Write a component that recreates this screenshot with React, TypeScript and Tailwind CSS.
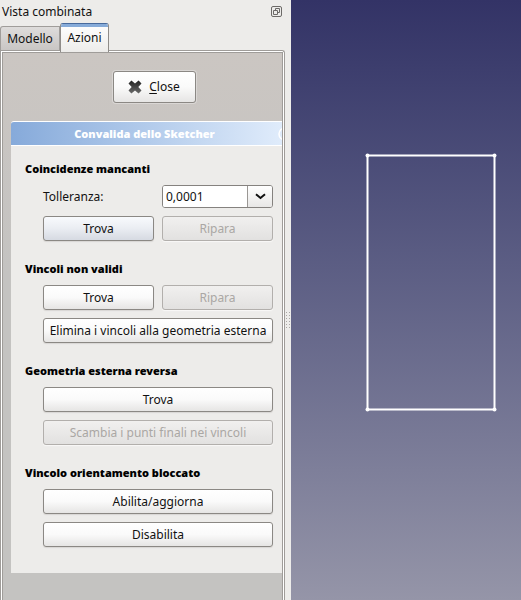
import type { ReactNode } from 'react';

type ActionButtonProps = {
  children: ReactNode;
  disabled?: boolean;
  focused?: boolean;
};

function ActionButton({ children, disabled = false, focused = false }: ActionButtonProps) {
  const tone = disabled
    ? 'border-[#b2afac] bg-linear-to-b from-[#f1f0ef] to-[#e2e1e0] text-[#aaa7a4] shadow-[0_1px_1px_#f9f9f8]'
    : focused
      ? 'border-[#8b8884] bg-linear-to-b from-[#f8fafd] via-[#eaedf2] to-[#d6dae2] text-[#111] shadow-[0_1px_1px_#d8d6d4]'
      : 'border-[#8b8884] bg-linear-to-b from-white via-[#fafafa] to-[#e6e5e4] text-[#111] shadow-[0_1px_1px_#d8d6d4]';
  return (
    <button
      type="button"
      disabled={disabled}
      className={`h-[25px] min-w-0 flex-1 whitespace-nowrap rounded-[3px] border text-center leading-5 ${tone}`}
    >
      {children}
    </button>
  );
}

function Section({ title, children }: { title: string; children: ReactNode }) {
  return (
    <section>
      <h3 className="mb-1.5 text-[11px] font-black leading-5 text-black">{title}</h3>
      <div className="flex flex-col gap-2 pl-[18px]">{children}</div>
    </section>
  );
}

function Row({ children }: { children: ReactNode }) {
  return <div className="flex gap-2">{children}</div>;
}

function ToleranceField() {
  return (
    <div className="grid grid-cols-2 items-center gap-2">
      <label htmlFor="tolerance">Tolleranza:</label>
      <div className="flex h-[23px] min-w-0 overflow-hidden rounded-[3px] border border-[#85827f] bg-white">
        <input
          id="tolerance"
          type="text"
          defaultValue="0,0001"
          className="w-0 min-w-0 flex-1 bg-white px-[3px] leading-5 text-[#111] outline-none"
        />
        <button
          type="button"
          aria-label="Mostra valori"
          className="flex w-[25px] items-center justify-center border-l border-[#9a9794] bg-linear-to-b from-white to-[#e8e7e6]"
        >
          <svg width="11" height="7" viewBox="0 0 11 7" fill="none" stroke="#111" strokeWidth="2">
            <path d="M1 1.2 L5.5 5 L10 1.2" />
          </svg>
        </button>
      </div>
    </div>
  );
}

function Sidebar() {
  return (
    <aside className="flex w-[285px] shrink-0 flex-col">
      <header className="flex h-[23px] items-center justify-between pl-0.5 pr-[3px]">
        <h1 className="leading-5">Vista combinata</h1>
        <button type="button" aria-label="Sgancia pannello">
          <svg width="11" height="11" viewBox="0 0 11 11" fill="none" stroke="#6c6a68">
            <rect x="0.5" y="0.5" width="10" height="10" rx="1.5" />
            <path d="M4.5 4.5 V2.5 H8.5 V6.5 H6.5 M2.5 4.5 H6.5 V8.5 H2.5 Z" />
          </svg>
        </button>
      </header>

      <div role="tablist" className="flex h-[27px] items-end">
        <button
          type="button"
          role="tab"
          aria-selected="false"
          className="h-6 w-[60px] rounded-tl-[3px] border border-b-0 border-[#a09d9a] bg-linear-to-b from-[#dedcdb] to-[#c9c6c4] leading-5"
        >
          Modello
        </button>
        <button
          type="button"
          role="tab"
          aria-selected="true"
          className="z-10 -mb-0.5 h-[29px] w-[49px] overflow-hidden rounded-t-[3px] border border-b-0 border-[#8f8c89] border-t-[#486a9c] bg-linear-to-b from-white to-[#edecea]"
        >
          <span className="flex h-full items-center justify-center border-t-[3px] border-[#86abd9] pb-1">
            Azioni
          </span>
        </button>
      </div>

      <div className="flex flex-1 flex-col rounded-tr-[3px] border border-b-0 border-[#9f9c99] bg-white px-px pt-px">
        <div className="flex flex-1 flex-col border-x border-t border-[#9f9c99] bg-linear-to-b from-[#cbc6c2] to-[#c4c3c1] to-40% pl-2">
          <div className="flex justify-center py-[18px] pl-[15px]">
            <button
              type="button"
              className="flex h-8 w-[83px] items-center justify-center gap-[7px] rounded-[3px] border border-[#8b8884] bg-linear-to-b from-white via-[#fafafa] to-[#e6e5e4] text-[#111] shadow-[0_0_0_1px_#dad7d5]"
            >
              <svg width="14" height="14" viewBox="0 0 14 14">
                <defs>
                  <linearGradient id="cross" x1="0" y1="0" x2="0" y2="1">
                    <stop offset="0" stopColor="#222" />
                    <stop offset="1" stopColor="#6a6a6a" />
                  </linearGradient>
                </defs>
                <path
                  fill="url(#cross)"
                  d="M3.4 0.5 L7 3.6 L10.6 0.5 L13.5 3.4 L10.3 7 L13.5 10.6 L10.6 13.5 L7 10.4 L3.4 13.5 L0.5 10.6 L3.7 7 L0.5 3.4 Z"
                />
              </svg>
              <span>
                <span className="underline underline-offset-2">C</span>lose
              </span>
            </button>
          </div>

          <div className="flex h-[25px] items-center overflow-hidden rounded-tl-[3px] border-y border-white bg-linear-to-r from-[#86aada] to-[#e0ecfb]">
            <h2 className="flex-1 text-center text-[11px] font-black leading-5 text-white">
              Convalida dello Sketcher
            </h2>
            <svg width="4" height="14" viewBox="0 0 4 14" fill="none" stroke="white" strokeWidth="1.5">
              <circle cx="7" cy="7" r="6" />
            </svg>
          </div>

          <div className="flex flex-col gap-[18px] bg-[#edecea] pb-[26px] pl-3.5 pr-[9px] pt-[13px]">
            <Section title="Coincidenze mancanti">
              <ToleranceField />
              <Row>
                <ActionButton focused>Trova</ActionButton>
                <ActionButton disabled>Ripara</ActionButton>
              </Row>
            </Section>
            <Section title="Vincoli non validi">
              <Row>
                <ActionButton>Trova</ActionButton>
                <ActionButton disabled>Ripara</ActionButton>
              </Row>
              <Row>
                <ActionButton>Elimina i vincoli alla geometria esterna</ActionButton>
              </Row>
            </Section>
            <Section title="Geometria esterna reversa">
              <Row>
                <ActionButton>Trova</ActionButton>
              </Row>
              <Row>
                <ActionButton disabled>Scambia i punti finali nei vincoli</ActionButton>
              </Row>
            </Section>
            <Section title="Vincolo orientamento bloccato">
              <Row>
                <ActionButton>Abilita/aggiorna</ActionButton>
              </Row>
              <Row>
                <ActionButton>Disabilita</ActionButton>
              </Row>
            </Section>
          </div>
        </div>
      </div>
    </aside>
  );
}

function Splitter() {
  const rows = [0, 3, 6, 9, 12, 15];
  return (
    <div className="flex w-1.5 shrink-0 items-center justify-center pt-10">
      <svg width="5" height="16" viewBox="0 0 5 16" fill="#aaa7a4">
        {rows.map((y) => (
          <g key={y}>
            <rect x="0" y={y} width="1" height="1" />
            <rect x="3" y={y} width="1" height="1" />
          </g>
        ))}
      </svg>
    </div>
  );
}

const corners = [
  [76.5, 155.5],
  [203.5, 155.5],
  [203.5, 409.5],
  [76.5, 409.5],
];

function Viewport() {
  return (
    <main className="flex min-w-0 flex-1 bg-linear-to-b from-[#333366] to-[#9595a8]">
      <svg className="w-full" aria-label="Schizzo">
        <rect x="76.5" y="155.5" width="127" height="254" fill="none" stroke="white" strokeOpacity="0.5" strokeWidth="3" />
        <rect x="76.5" y="155.5" width="127" height="254" fill="none" stroke="white" strokeWidth="1" />
        {corners.map(([x, y]) => (
          <circle key={`${x}-${y}`} cx={x} cy={y} r="2" fill="white" />
        ))}
      </svg>
    </main>
  );
}

export default function App() {
  return (
    <div className="flex min-h-screen bg-[#edecea] font-['Noto_Sans',sans-serif] text-[12px] text-[#111]">
      <Sidebar />
      <Splitter />
      <Viewport />
    </div>
  );
}
